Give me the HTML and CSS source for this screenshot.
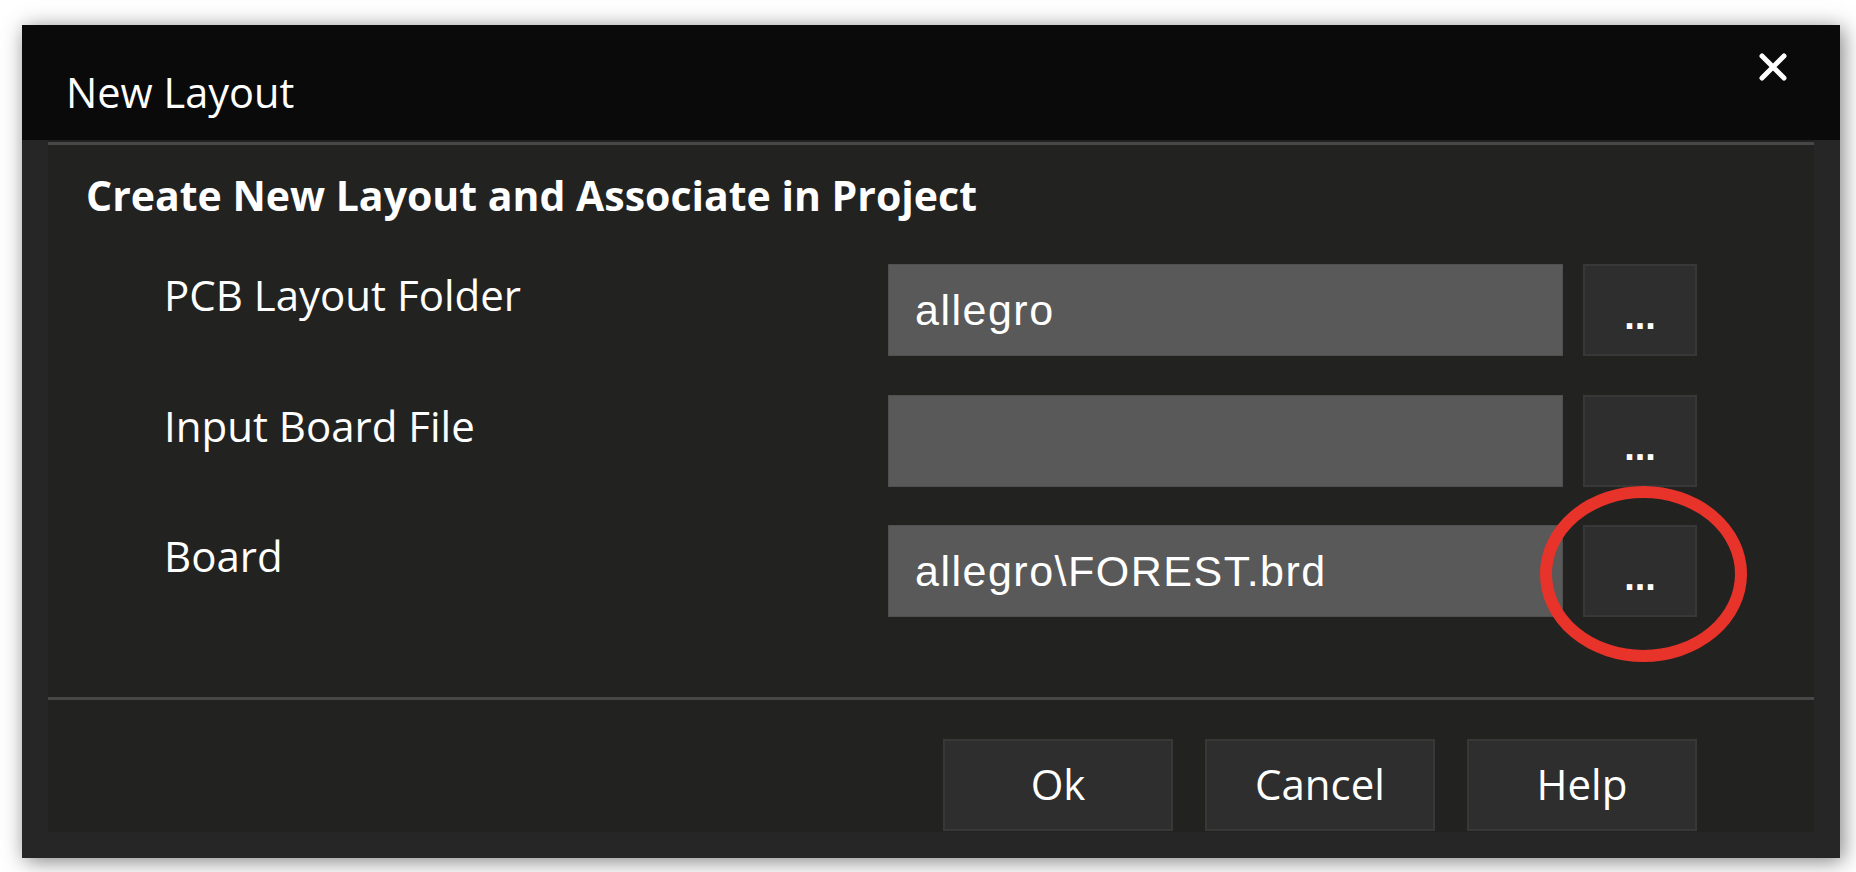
FILE: index.html
```html
<!DOCTYPE html>
<html>
<head>
<meta charset="utf-8">
<title>New Layout</title>
<link rel="stylesheet" href="styles.css">
</head>
<body>
<div class="dialog">
  <div class="titlebar">
    <div class="title">New Layout</div>
    <div class="close">
      <svg width="30" height="30" viewBox="0 0 30 30"><path d="M4 4 L26 26 M26 4 L4 26" stroke="#ffffff" stroke-width="5" stroke-linecap="round"/></svg>
    </div>
  </div>
  <div class="panel">
    <div class="sep top"></div>
    <div class="heading">Create New Layout and Associate in Project</div>
    <div class="form">
      <div class="row">
        <div class="label">PCB Layout Folder</div>
        <div class="field">allegro</div>
        <div class="browse">...</div>
      </div>
      <div class="row">
        <div class="label">Input Board File</div>
        <div class="field"></div>
        <div class="browse">...</div>
      </div>
      <div class="row">
        <div class="label">Board</div>
        <div class="field">allegro\FOREST.brd</div>
        <div class="browse marked">...
          <svg class="ring" width="207" height="176" viewBox="0 0 207 176"><ellipse cx="103.5" cy="88" rx="97.5" ry="82" fill="none" stroke="#e8332a" stroke-width="12"/></svg>
        </div>
      </div>
    </div>
    <div class="sep bottom"></div>
    <div class="actions">
      <div class="btn">Ok</div>
      <div class="btn">Cancel</div>
      <div class="btn">Help</div>
    </div>
  </div>
</div>
</body>
</html>
```

FILE: styles.css
```css
html, body {
  margin: 0;
  padding: 0;
  background: #ffffff;
}
body {
  width: 1856px;
  height: 872px;
  overflow: hidden;
  font-family: "Open Sans", "Noto Sans", sans-serif;
  color: #ffffff;
}
.dialog {
  margin: 25px 0 0 22px;
  width: 1818px;
  height: 833px;
  box-sizing: border-box;
  background: #262626;
  padding: 0 26px 26px 26px;
  display: flex;
  flex-direction: column;
  box-shadow: 3px 3px 20px rgba(0, 0, 0, 0.5);
}
.titlebar {
  height: 115px;
  margin: 0 -26px;
  background: #0a0a0a;
  display: flex;
  align-items: flex-start;
}
.title {
  font-size: 41.5px;
  line-height: 58px;
  padding: 38px 0 0 44px;
}
.close {
  margin: 27px 52px 0 auto;
  width: 30px;
  height: 30px;
}
.close svg { display: block; }
.panel {
  flex: 1;
  background: #222321;
  display: flex;
  flex-direction: column;
}
.sep {
  height: 3px;
  background: #474747;
}
.sep.top { margin-top: 2px; }
.sep.bottom { margin-top: 80px; }
.heading {
  font-weight: 700;
  font-size: 41px;
  line-height: 58px;
  margin: 21px 0 0 38px;
}
.form {
  margin-top: 40px;
  display: flex;
  flex-direction: column;
  gap: 38.5px;
}
.row {
  display: flex;
  height: 92px;
  padding-left: 116px;
}
.label {
  width: 724px;
  font-size: 42px;
  line-height: 58px;
  padding-top: 2px;
}
.field {
  width: 675px;
  box-sizing: border-box;
  background: #595959;
  border: 1px solid #505050;
  font-family: "Liberation Sans", Arial, sans-serif;
  font-size: 43px;
  letter-spacing: 1.5px;
  line-height: 90px;
  padding-left: 26px;
}
.browse {
  position: relative;
  width: 114px;
  margin-left: 20px;
  box-sizing: border-box;
  background: #2e2e2e;
  border: 2px solid #383838;
  font-family: "Liberation Sans", Arial, sans-serif;
  font-weight: 700;
  font-size: 38px;
  line-height: 40px;
  padding-top: 30px;
  text-align: center;
}
.ring {
  position: absolute;
  left: -45px;
  top: -41px;
}
.actions {
  margin-top: 39px;
  display: flex;
  justify-content: flex-end;
  gap: 32px;
  padding-right: 117px;
}
.btn {
  width: 230px;
  height: 92px;
  box-sizing: border-box;
  background: #2e2e2e;
  border: 2px solid #383838;
  font-size: 42px;
  line-height: 86px;
  text-align: center;
}
```
